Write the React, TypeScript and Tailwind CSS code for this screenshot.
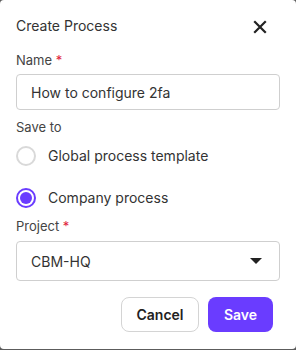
const purple = "bg-[#6a3cff]";

function Radio({ checked, label }: { checked?: boolean; label: string }) {
  return (
    <label className="flex items-center gap-3 h-[20px]">
      {checked ? (
        <span className="w-[20px] h-[20px] rounded-full border-2 border-[#6a3cff] flex items-center justify-center">
          <span className={`w-[12px] h-[12px] rounded-full ${purple}`} />
        </span>
      ) : (
        <span className="w-[20px] h-[20px] rounded-full border-2 border-[#d9d9d9]" />
      )}
      <span className="text-[14px] leading-[20px] text-[#333]">{label}</span>
    </label>
  );
}

export default function App() {
  return (
    <div className="w-[296px] h-[350px] bg-[#5c5c5c]" style={{ fontFamily: "Inter, sans-serif" }}>
      <div className="h-[349px] bg-white rounded-[4px] px-4 pt-[16px]">
        <div className="flex items-center justify-between h-[20px]">
          <h2 className="text-[14px] leading-[20px] text-[#333]">Create Process</h2>
          <svg width="14" height="14" viewBox="0 0 14 14" className="mr-[13px] mt-[2px]">
            <path d="M2 2L12 12M12 2L2 12" stroke="#222" strokeWidth="2.2" strokeLinecap="square" />
          </svg>
        </div>

        <div className="mt-[16px] text-[13px] leading-[16px] text-[#444]">
          Name <span className="text-[#e0223a]">*</span>
        </div>
        <div className="mt-[6px] h-[36px] border border-[#cfcfcf] rounded-[4px] flex items-center px-[14px] text-[14px] text-[#333]">
          How to configure 2fa
        </div>

        <div className="mt-[9px] text-[13px] leading-[16px] text-[#444]">Save to</div>
        <div className="mt-[11px] flex flex-col gap-[22px]">
          <Radio label="Global process template" />
          <Radio checked label="Company process" />
        </div>

        <div className="mt-[10px] text-[13px] leading-[16px] text-[#444]">
          Project <span className="text-[#e0223a]">*</span>
        </div>
        <div className="mt-[7px] h-[40px] border border-[#cfcfcf] rounded-[4px] flex items-center justify-between px-[14px] text-[14px] text-[#333]">
          <span>CBM-HQ</span>
          <svg width="12" height="6" viewBox="0 0 12 6" className="mr-[3px]">
            <path d="M0 0H12L6 6Z" fill="#222" />
          </svg>
        </div>

        <div className="mt-[16px] flex justify-end gap-[9px] pr-[7px]">
          <button className="h-[35px] w-[78px] rounded-[8px] border border-[#d4d4d4] text-[14px] font-semibold text-[#222]">
            Cancel
          </button>
          <button className={`h-[35px] w-[65px] rounded-[8px] ${purple} text-[14px] font-semibold text-white`}>
            Save
          </button>
        </div>
      </div>
    </div>
  );
}
